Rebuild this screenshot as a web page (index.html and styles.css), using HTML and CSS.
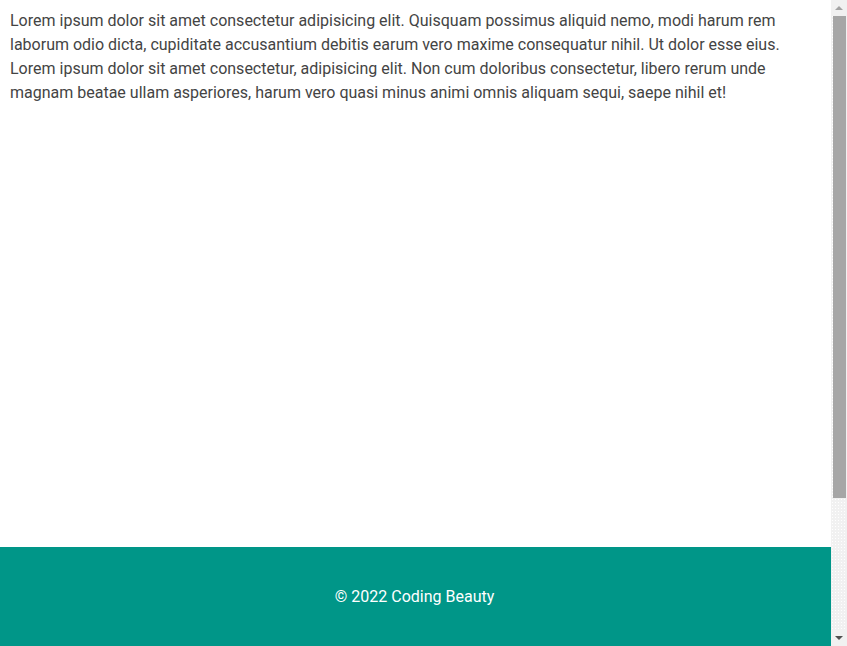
FILE: index.html
```html
<!DOCTYPE html>
<html lang="en">
<head>
<meta charset="utf-8">
<title>Coding Beauty</title>
<link rel="stylesheet" href="styles.css">
</head>
<body>
<div class="app">
  <div class="page">
    <main class="content">
      <p>Lorem ipsum dolor sit amet consectetur adipisicing elit. Quisquam possimus aliquid nemo, modi harum rem laborum odio dicta, cupiditate accusantium debitis earum vero maxime consequatur nihil. Ut dolor esse eius. Lorem ipsum dolor sit amet consectetur, adipisicing elit. Non cum doloribus consectetur, libero rerum unde magnam beatae ullam asperiores, harum vero quasi minus animi omnis aliquam sequi, saepe nihil et!</p>
    </main>
    <footer class="footer">© 2022 Coding Beauty</footer>
  </div>
  <div class="scrollbar">
    <div class="arrow arrow-up"></div>
    <div class="track">
      <div class="thumb"></div>
    </div>
    <div class="arrow arrow-down"></div>
  </div>
</div>
</body>
</html>
```
FILE: styles.css
```css
html, body {
  margin: 0;
  padding: 0;
  height: 100%;
  overflow: hidden;
}
body {
  font-family: Roboto, "Liberation Sans", sans-serif;
  background: #fff;
}
.app {
  display: flex;
  height: 646px;
}
.page {
  flex: 1;
  display: flex;
  flex-direction: column;
  min-width: 0;
}
.content {
  flex: 1;
  padding: 9px 10px 0 10px;
}
.content p {
  margin: 0;
  font-size: 16px;
  line-height: 24px;
  color: #444;
}
.footer {
  height: 99px;
  background: #009688;
  color: #fff;
  font-size: 16px;
  display: flex;
  align-items: center;
  justify-content: center;
  padding-right: 2px;
}
.scrollbar {
  width: 16px;
  display: flex;
  flex-direction: column;
  background-color: #f1f1f1;
  background-image: radial-gradient(#fff 0.6px, transparent 0.8px);
  background-size: 3px 3px;
}
.arrow {
  height: 16px;
  display: flex;
  align-items: center;
  justify-content: center;
  background: #f1f1f1;
}
.arrow-up::before {
  content: "";
  border-left: 4px solid transparent;
  border-right: 4px solid transparent;
  border-bottom: 4px solid #a3a3a3;
}
.arrow-down::before {
  content: "";
  border-left: 4px solid transparent;
  border-right: 4px solid transparent;
  border-top: 4px solid #505050;
}
.track {
  flex: 1;
  padding: 0 1px 0 2px;
}
.thumb {
  height: 482px;
  background: #a6a6a6;
}
```
